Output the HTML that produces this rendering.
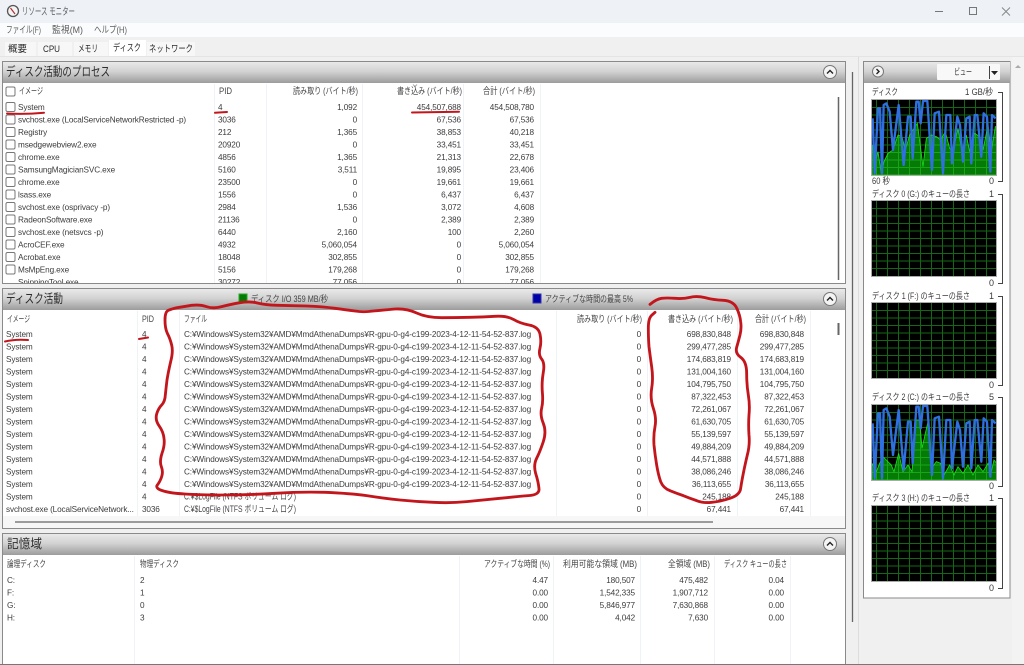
<!DOCTYPE html>
<html lang="ja"><head><meta charset="utf-8"><title>リソース モニター</title>
<style>
html,body{margin:0;padding:0;width:1024px;height:665px;overflow:hidden;background:#f0f0f0}
svg{display:block;font-family:"Liberation Sans","Noto Sans CJK JP",sans-serif}
body>svg{filter:blur(.35px)}
text{font-size:8.2px;fill:#3c3c3c;letter-spacing:-.12px}
.e{text-anchor:end}
.h{font-size:12.5px;fill:#2c2c2c;letter-spacing:0}
.j{font-size:9px;fill:#444;letter-spacing:0}
.m{font-size:9.5px;fill:#5c5c5c;letter-spacing:0}
.t{font-size:9.5px;fill:#2a2a2a;letter-spacing:0}
.g{font-size:9px;fill:#3a3a3a;letter-spacing:0}
.r{fill:none;stroke:#c2161c;stroke-linejoin:round;stroke-linecap:round}
.b{fill:none;stroke:#2f6fe0;stroke-width:7;stroke-linejoin:round}
.f{stroke:#16e016;stroke-width:2.5;fill:#067a06}
.s{stroke:#eef3f8;stroke-width:1}
</style></head><body>
<svg width="1024" height="665" viewBox="0 0 1024 665" xmlns="http://www.w3.org/2000/svg">
<defs>
<linearGradient id="hd" x1="0" y1="0" x2="0" y2="1"><stop offset="0" stop-color="#e9e9e9"/><stop offset=".45" stop-color="#d2d2d2"/><stop offset="1" stop-color="#9c9c9c"/></linearGradient>
<g id="grid"><path d="M4.5 0V75M15.5 0V75M26.5 0V75M37.5 0V75M48.5 0V75M59.5 0V75M70.5 0V75M81.5 0V75M92.5 0V75M103.5 0V75M114.5 0V75M0 7.5H124M0 15H124M0 22.5H124M0 30H124M0 37.5H124M0 45H124M0 52.5H124M0 60H124M0 67.5H124" fill="none" stroke="#2bd82b" stroke-opacity=".48" stroke-width="1"/></g>
</defs>
<rect width="1024" height="665" fill="#f0f0f0"/>
<!-- title -->
<rect width="1024" height="23" fill="#eef2f7"/>
<rect y="23" width="1024" height="14" fill="#fbfcfd"/>
<rect y="37" width="1024" height="19" fill="#f0f0f0"/>
<circle cx="13" cy="11" r="5.500" fill="#f4f4f4" stroke="#555" stroke-width="1.300"/><path d="M10.500 8l4.500 6" stroke="#b03030" stroke-width="1.200"/>
<text x="22" y="15" class="m" style="font-size:10px" textLength="53" lengthAdjust="spacingAndGlyphs">リソース モニター</text>
<path d="M935 11.500h8" stroke="#777"/><rect x="969.500" y="7.500" width="7" height="7" fill="none" stroke="#777"/><path d="M1002 7.500l8 8M1010 7.500l-8 8" stroke="#888"/>
<text x="6" y="33" class="m" textLength="35" lengthAdjust="spacingAndGlyphs">ファイル(F)</text><text x="52" y="33" class="m" textLength="31" lengthAdjust="spacingAndGlyphs">監視(M)</text><text x="94" y="33" class="m" textLength="33" lengthAdjust="spacingAndGlyphs">ヘルプ(H)</text>
<!-- tabs -->
<rect x="5" y="42" width="31" height="14" fill="#f7f7f7"/><rect x="38" y="42" width="34" height="14" fill="#f7f7f7"/><rect x="74" y="42" width="34" height="14" fill="#f7f7f7"/><rect x="109" y="40" width="37" height="16" fill="#fff"/><rect x="147" y="42" width="48" height="14" fill="#f7f7f7"/>
<text x="8" y="52" class="t" textLength="19" lengthAdjust="spacingAndGlyphs">概要</text><text x="43" y="52" class="t" textLength="17" lengthAdjust="spacingAndGlyphs">CPU</text><text x="78" y="52" class="t" textLength="20" lengthAdjust="spacingAndGlyphs">メモリ</text><text x="113" y="51" class="t" textLength="28" lengthAdjust="spacingAndGlyphs">ディスク</text><text x="149" y="52" class="t" textLength="44" lengthAdjust="spacingAndGlyphs">ネットワーク</text>
<rect y="56" width="1024" height="1" fill="#e4e4e4"/>
<!-- section 1 -->
<rect x="2.500" y="61.500" width="843" height="222" fill="#fff" stroke="#8a8a8a"/>
<rect x="3" y="62" width="842" height="21" fill="url(#hd)"/>
<text x="6" y="76" class="h" textLength="104" lengthAdjust="spacingAndGlyphs">ディスク活動のプロセス</text>
<circle cx="830" cy="72" r="6.500" fill="#f4f4f4" stroke="#777"/><path d="M827 73.500l3-3 3 3" fill="none" stroke="#222" stroke-width="1.400"/>
<path class="s" d="M214.500 84V283M266.500 84V283M362.500 84V283M463.500 84V283M540.500 84V283"/>
<rect x="6" y="87" width="9" height="9" rx="1.500" fill="#fff" stroke="#777"/>
<text x="19" y="94" class="j" textLength="24" lengthAdjust="spacingAndGlyphs">イメージ</text><text x="219" y="94" class="j" textLength="13" lengthAdjust="spacingAndGlyphs">PID</text>
<text x="293" y="94" class="j" textLength="65" lengthAdjust="spacingAndGlyphs">読み取り (バイト/秒)</text><text x="397" y="94" class="j" textLength="65" lengthAdjust="spacingAndGlyphs">書き込み (バイト/秒)</text><text x="483" y="94" class="j" textLength="52" lengthAdjust="spacingAndGlyphs">合計 (バイト/秒)</text>
<path d="M413 84.500l2 2 2-2" fill="none" stroke="#aaa"/>
<g fill="#fff" stroke="#777"><rect x="6" y="102.500" width="9" height="9" rx="1.500"/><rect x="6" y="115" width="9" height="9" rx="1.500"/><rect x="6" y="127.500" width="9" height="9" rx="1.500"/><rect x="6" y="140" width="9" height="9" rx="1.500"/><rect x="6" y="152.500" width="9" height="9" rx="1.500"/><rect x="6" y="165" width="9" height="9" rx="1.500"/><rect x="6" y="177.500" width="9" height="9" rx="1.500"/><rect x="6" y="190" width="9" height="9" rx="1.500"/><rect x="6" y="202.500" width="9" height="9" rx="1.500"/><rect x="6" y="215" width="9" height="9" rx="1.500"/><rect x="6" y="227.500" width="9" height="9" rx="1.500"/><rect x="6" y="240" width="9" height="9" rx="1.500"/><rect x="6" y="252.500" width="9" height="9" rx="1.500"/><rect x="6" y="265" width="9" height="9" rx="1.500"/></g>
<text x="18" y="110">System</text><text x="218" y="110">4</text><text x="357" y="110" class="e">1,092</text><text x="461" y="110" class="e">454,507,688</text><text x="534" y="110" class="e">454,508,780</text>
<text x="18" y="122.500" textLength="168">svchost.exe (LocalServiceNetworkRestricted -p)</text><text x="218" y="122.500">3036</text><text x="357" y="122.500" class="e">0</text><text x="461" y="122.500" class="e">67,536</text><text x="534" y="122.500" class="e">67,536</text>
<text x="18" y="135">Registry</text><text x="218" y="135">212</text><text x="357" y="135" class="e">1,365</text><text x="461" y="135" class="e">38,853</text><text x="534" y="135" class="e">40,218</text>
<text x="18" y="147.500">msedgewebview2.exe</text><text x="218" y="147.500">20920</text><text x="357" y="147.500" class="e">0</text><text x="461" y="147.500" class="e">33,451</text><text x="534" y="147.500" class="e">33,451</text>
<text x="18" y="160">chrome.exe</text><text x="218" y="160">4856</text><text x="357" y="160" class="e">1,365</text><text x="461" y="160" class="e">21,313</text><text x="534" y="160" class="e">22,678</text>
<text x="18" y="172.500">SamsungMagicianSVC.exe</text><text x="218" y="172.500">5160</text><text x="357" y="172.500" class="e">3,511</text><text x="461" y="172.500" class="e">19,895</text><text x="534" y="172.500" class="e">23,406</text>
<text x="18" y="185">chrome.exe</text><text x="218" y="185">23500</text><text x="357" y="185" class="e">0</text><text x="461" y="185" class="e">19,661</text><text x="534" y="185" class="e">19,661</text>
<text x="18" y="197.500">lsass.exe</text><text x="218" y="197.500">1556</text><text x="357" y="197.500" class="e">0</text><text x="461" y="197.500" class="e">6,437</text><text x="534" y="197.500" class="e">6,437</text>
<text x="18" y="210">svchost.exe (osprivacy -p)</text><text x="218" y="210">2984</text><text x="357" y="210" class="e">1,536</text><text x="461" y="210" class="e">3,072</text><text x="534" y="210" class="e">4,608</text>
<text x="18" y="222.500">RadeonSoftware.exe</text><text x="218" y="222.500">21136</text><text x="357" y="222.500" class="e">0</text><text x="461" y="222.500" class="e">2,389</text><text x="534" y="222.500" class="e">2,389</text>
<text x="18" y="235">svchost.exe (netsvcs -p)</text><text x="218" y="235">6440</text><text x="357" y="235" class="e">2,160</text><text x="461" y="235" class="e">100</text><text x="534" y="235" class="e">2,260</text>
<text x="18" y="247.500">AcroCEF.exe</text><text x="218" y="247.500">4932</text><text x="357" y="247.500" class="e">5,060,054</text><text x="461" y="247.500" class="e">0</text><text x="534" y="247.500" class="e">5,060,054</text>
<text x="18" y="260">Acrobat.exe</text><text x="218" y="260">18048</text><text x="357" y="260" class="e">302,855</text><text x="461" y="260" class="e">0</text><text x="534" y="260" class="e">302,855</text>
<text x="18" y="272.500">MsMpEng.exe</text><text x="218" y="272.500">5156</text><text x="357" y="272.500" class="e">179,268</text><text x="461" y="272.500" class="e">0</text><text x="534" y="272.500" class="e">179,268</text>
<text x="18" y="285">SnippingTool.exe</text><text x="218" y="285">30272</text><text x="357" y="285" class="e">77,056</text><text x="461" y="285" class="e">0</text><text x="534" y="285" class="e">77,056</text>
<rect x="0" y="284" width="848" height="5" fill="#f0f0f0"/>
<path d="M2.500 283.500H845.500" stroke="#8a8a8a"/>
<path d="M838.500 97V280" stroke="#666" stroke-width="1.500"/>
<!-- section 2 -->
<rect x="2.500" y="288.500" width="843" height="240" fill="#fff" stroke="#8a8a8a"/>
<rect x="3" y="289" width="842" height="21" fill="url(#hd)"/>
<text x="6" y="303" class="h" textLength="57" lengthAdjust="spacingAndGlyphs">ディスク活動</text>
<rect x="239" y="294" width="8" height="9" fill="#067a06" stroke="#2a2"/>
<text x="251" y="302" class="j" textLength="77" lengthAdjust="spacingAndGlyphs">ディスク I/O 359 MB/秒</text>
<rect x="533" y="294" width="8" height="9" fill="#0000a8" stroke="#33a"/>
<text x="545" y="302" class="j" textLength="88" lengthAdjust="spacingAndGlyphs">アクティブな時間の最高 5%</text>
<circle cx="830" cy="299" r="6.500" fill="#f4f4f4" stroke="#777"/><path d="M827 300.500l3-3 3 3" fill="none" stroke="#222" stroke-width="1.400"/>
<path class="s" d="M137.500 311V516M179.500 311V516M556.500 311V516M647.500 311V516M737.500 311V516M810.500 311V516"/>
<text x="7" y="322" class="j" textLength="23" lengthAdjust="spacingAndGlyphs">イメージ</text><text x="142" y="322" class="j" textLength="12" lengthAdjust="spacingAndGlyphs">PID</text><text x="184" y="322" class="j" textLength="23" lengthAdjust="spacingAndGlyphs">ファイル</text>
<text x="577" y="322" class="j" textLength="65" lengthAdjust="spacingAndGlyphs">読み取り (バイト/秒)</text><text x="668" y="322" class="j" textLength="65" lengthAdjust="spacingAndGlyphs">書き込み (バイト/秒)</text><text x="755" y="322" class="j" textLength="51" lengthAdjust="spacingAndGlyphs">合計 (バイト/秒)</text>
<text x="6" y="337">System</text><text x="142" y="337">4</text><text x="184" y="337" textLength="347">C:¥Windows¥System32¥AMD¥MmdAthenaDumps¥R-gpu-0-g4-c199-2023-4-12-11-54-52-837.log</text><text x="641" y="337" class="e">0</text><text x="731" y="337" class="e">698,830,848</text><text x="804" y="337" class="e">698,830,848</text>
<text x="6" y="349.500">System</text><text x="142" y="349.500">4</text><text x="184" y="349.500" textLength="347">C:¥Windows¥System32¥AMD¥MmdAthenaDumps¥R-gpu-0-g4-c199-2023-4-12-11-54-52-837.log</text><text x="641" y="349.500" class="e">0</text><text x="731" y="349.500" class="e">299,477,285</text><text x="804" y="349.500" class="e">299,477,285</text>
<text x="6" y="362">System</text><text x="142" y="362">4</text><text x="184" y="362" textLength="347">C:¥Windows¥System32¥AMD¥MmdAthenaDumps¥R-gpu-0-g4-c199-2023-4-12-11-54-52-837.log</text><text x="641" y="362" class="e">0</text><text x="731" y="362" class="e">174,683,819</text><text x="804" y="362" class="e">174,683,819</text>
<text x="6" y="374.500">System</text><text x="142" y="374.500">4</text><text x="184" y="374.500" textLength="347">C:¥Windows¥System32¥AMD¥MmdAthenaDumps¥R-gpu-0-g4-c199-2023-4-12-11-54-52-837.log</text><text x="641" y="374.500" class="e">0</text><text x="731" y="374.500" class="e">131,004,160</text><text x="804" y="374.500" class="e">131,004,160</text>
<text x="6" y="387">System</text><text x="142" y="387">4</text><text x="184" y="387" textLength="347">C:¥Windows¥System32¥AMD¥MmdAthenaDumps¥R-gpu-0-g4-c199-2023-4-12-11-54-52-837.log</text><text x="641" y="387" class="e">0</text><text x="731" y="387" class="e">104,795,750</text><text x="804" y="387" class="e">104,795,750</text>
<text x="6" y="399.500">System</text><text x="142" y="399.500">4</text><text x="184" y="399.500" textLength="347">C:¥Windows¥System32¥AMD¥MmdAthenaDumps¥R-gpu-0-g4-c199-2023-4-12-11-54-52-837.log</text><text x="641" y="399.500" class="e">0</text><text x="731" y="399.500" class="e">87,322,453</text><text x="804" y="399.500" class="e">87,322,453</text>
<text x="6" y="412">System</text><text x="142" y="412">4</text><text x="184" y="412" textLength="347">C:¥Windows¥System32¥AMD¥MmdAthenaDumps¥R-gpu-0-g4-c199-2023-4-12-11-54-52-837.log</text><text x="641" y="412" class="e">0</text><text x="731" y="412" class="e">72,261,067</text><text x="804" y="412" class="e">72,261,067</text>
<text x="6" y="424.500">System</text><text x="142" y="424.500">4</text><text x="184" y="424.500" textLength="347">C:¥Windows¥System32¥AMD¥MmdAthenaDumps¥R-gpu-0-g4-c199-2023-4-12-11-54-52-837.log</text><text x="641" y="424.500" class="e">0</text><text x="731" y="424.500" class="e">61,630,705</text><text x="804" y="424.500" class="e">61,630,705</text>
<text x="6" y="437">System</text><text x="142" y="437">4</text><text x="184" y="437" textLength="347">C:¥Windows¥System32¥AMD¥MmdAthenaDumps¥R-gpu-0-g4-c199-2023-4-12-11-54-52-837.log</text><text x="641" y="437" class="e">0</text><text x="731" y="437" class="e">55,139,597</text><text x="804" y="437" class="e">55,139,597</text>
<text x="6" y="449.500">System</text><text x="142" y="449.500">4</text><text x="184" y="449.500" textLength="347">C:¥Windows¥System32¥AMD¥MmdAthenaDumps¥R-gpu-0-g4-c199-2023-4-12-11-54-52-837.log</text><text x="641" y="449.500" class="e">0</text><text x="731" y="449.500" class="e">49,884,209</text><text x="804" y="449.500" class="e">49,884,209</text>
<text x="6" y="462">System</text><text x="142" y="462">4</text><text x="184" y="462" textLength="347">C:¥Windows¥System32¥AMD¥MmdAthenaDumps¥R-gpu-0-g4-c199-2023-4-12-11-54-52-837.log</text><text x="641" y="462" class="e">0</text><text x="731" y="462" class="e">44,571,888</text><text x="804" y="462" class="e">44,571,888</text>
<text x="6" y="474.500">System</text><text x="142" y="474.500">4</text><text x="184" y="474.500" textLength="347">C:¥Windows¥System32¥AMD¥MmdAthenaDumps¥R-gpu-0-g4-c199-2023-4-12-11-54-52-837.log</text><text x="641" y="474.500" class="e">0</text><text x="731" y="474.500" class="e">38,086,246</text><text x="804" y="474.500" class="e">38,086,246</text>
<text x="6" y="487">System</text><text x="142" y="487">4</text><text x="184" y="487" textLength="347">C:¥Windows¥System32¥AMD¥MmdAthenaDumps¥R-gpu-0-g4-c199-2023-4-12-11-54-52-837.log</text><text x="641" y="487" class="e">0</text><text x="731" y="487" class="e">36,113,655</text><text x="804" y="487" class="e">36,113,655</text>
<text x="6" y="499.500">System</text><text x="142" y="499.500">4</text><text x="184" y="499.500" class="j" textLength="112" lengthAdjust="spacingAndGlyphs">C:¥$LogFile (NTFS ボリューム ログ)</text><text x="641" y="499.500" class="e">0</text><text x="731" y="499.500" class="e">245,188</text><text x="804" y="499.500" class="e">245,188</text>
<text x="6" y="512">svchost.exe (LocalServiceNetwork...</text><text x="142" y="512">3036</text><text x="184" y="512" class="j" textLength="112" lengthAdjust="spacingAndGlyphs">C:¥$LogFile (NTFS ボリューム ログ)</text><text x="641" y="512" class="e">0</text><text x="731" y="512" class="e">67,441</text><text x="804" y="512" class="e">67,441</text>
<rect x="3" y="516" width="842" height="12" fill="#f7f7f7"/>
<path d="M15 522H713" stroke="#666" stroke-width="1.300"/>
<path d="M838.500 323V335" stroke="#666" stroke-width="2"/>
<!-- section 3 -->
<rect x="2.500" y="533.500" width="843" height="132" fill="#fff" stroke="#8a8a8a"/>
<rect x="3" y="534" width="842" height="21" fill="url(#hd)"/>
<text x="7" y="548" class="h" textLength="35" lengthAdjust="spacingAndGlyphs">記憶域</text>
<circle cx="830" cy="544" r="6.500" fill="#f4f4f4" stroke="#777"/><path d="M827 545.500l3-3 3 3" fill="none" stroke="#222" stroke-width="1.400"/>
<path class="s" d="M134.500 556V664M459.500 556V664M553.500 556V664M640.500 556V664M714.500 556V664M790.500 556V664"/>
<text x="7" y="567" class="j" textLength="39" lengthAdjust="spacingAndGlyphs">論理ディスク</text><text x="140" y="567" class="j" textLength="39" lengthAdjust="spacingAndGlyphs">物理ディスク</text>
<text x="484" y="567" class="j" textLength="66" lengthAdjust="spacingAndGlyphs">アクティブな時間 (%)</text><text x="563" y="567" class="j" textLength="74" lengthAdjust="spacingAndGlyphs">利用可能な領域 (MB)</text><text x="668" y="567" class="j" textLength="42" lengthAdjust="spacingAndGlyphs">全領域 (MB)</text><text x="724" y="567" class="j" textLength="63" lengthAdjust="spacingAndGlyphs">ディスク キューの長さ</text>
<text x="7" y="583">C:</text><text x="140" y="583">2</text><text x="548" y="583" class="e">4.47</text><text x="635" y="583" class="e">180,507</text><text x="708" y="583" class="e">475,482</text><text x="784" y="583" class="e">0.04</text>
<text x="7" y="595.500">F:</text><text x="140" y="595.500">1</text><text x="548" y="595.500" class="e">0.00</text><text x="635" y="595.500" class="e">1,542,335</text><text x="708" y="595.500" class="e">1,907,712</text><text x="784" y="595.500" class="e">0.00</text>
<text x="7" y="608">G:</text><text x="140" y="608">0</text><text x="548" y="608" class="e">0.00</text><text x="635" y="608" class="e">5,846,977</text><text x="708" y="608" class="e">7,630,868</text><text x="784" y="608" class="e">0.00</text>
<text x="7" y="620.500">H:</text><text x="140" y="620.500">3</text><text x="548" y="620.500" class="e">0.00</text><text x="635" y="620.500" class="e">4,042</text><text x="708" y="620.500" class="e">7,630</text><text x="784" y="620.500" class="e">0.00</text>
<!-- outer scrollbar -->
<path d="M852.500 72V622" stroke="#666" stroke-width="1.300"/>
<path d="M858.500 57V665" stroke="#ddd"/>
<!-- right panel -->
<rect x="863.500" y="61.500" width="146.500" height="536.500" fill="#fff" stroke="#8a8a8a"/>
<rect x="864" y="62" width="146" height="21" fill="url(#hd)"/>
<circle cx="878" cy="71.500" r="5.500" fill="#f4f4f4" stroke="#777"/><path d="M876.500 69l2.500 2.500-2.500 2.500" fill="none" stroke="#222" stroke-width="1.400"/>
<rect x="937" y="64" width="63" height="16" rx="1" fill="#f8f8f8"/>
<text x="954" y="75" class="g" textLength="18" lengthAdjust="spacingAndGlyphs">ビュー</text>
<path d="M989.500 66V79" stroke="#444"/><path d="M991 71h7l-3.500 4z" fill="#222"/>
<rect x="1012" y="57" width="12" height="608" fill="#f3f3f3"/><path d="M1015 68l3-3 3 3z" fill="#aaa"/>
<!-- labels -->
<text x="872" y="95" class="g" textLength="26" lengthAdjust="spacingAndGlyphs">ディスク</text><text x="965" y="95" class="g" textLength="28" lengthAdjust="spacingAndGlyphs">1 GB/秒</text>
<text x="872" y="184" class="g" textLength="18" lengthAdjust="spacingAndGlyphs">60 秒</text><text x="994" y="184" class="g e">0</text>
<text x="872" y="197" class="g" textLength="98" lengthAdjust="spacingAndGlyphs">ディスク 0 (G:) のキューの長さ</text><text x="994" y="197" class="g e">1</text><text x="994" y="286" class="g e">0</text>
<text x="872" y="299" class="g" textLength="98" lengthAdjust="spacingAndGlyphs">ディスク 1 (F:) のキューの長さ</text><text x="994" y="299" class="g e">1</text><text x="994" y="388" class="g e">0</text>
<text x="872" y="400" class="g" textLength="98" lengthAdjust="spacingAndGlyphs">ディスク 2 (C:) のキューの長さ</text><text x="994" y="400" class="g e">5</text><text x="994" y="489" class="g e">0</text>
<text x="872" y="501" class="g" textLength="98" lengthAdjust="spacingAndGlyphs">ディスク 3 (H:) のキューの長さ</text><text x="994" y="501" class="g e">1</text><text x="994" y="591" class="g e">0</text>
<path d="M998 92.500h4.500v89h-4.500M998 194.500h4.500v89h-4.500M998 296.500h4.500v89h-4.500M998 397.500h4.500v89h-4.500M998 498.500h4.500v90h-4.500" fill="none" stroke="#444"/>
<!-- graphs -->
<rect x="871.500" y="99.500" width="125" height="76" fill="none" stroke="#aaa"/>
<svg x="872" y="100" width="124" height="75"><rect width="124" height="75" fill="#000"/><g transform="translate(-4,-5) scale(.3333)"><polygon class="f" points="12,240 12,150 22,200 30,170 40,236 48,200 60,175 75,165 90,120 102,125 112,165 125,120 135,105 148,85 158,160 165,215 175,130 190,120 205,125 218,135 232,110 245,160 255,170 270,100 282,170 295,120 305,170 320,115 335,125 345,165 360,90 370,170 382,95 390,95 390,240"/></g><use href="#grid"/><g transform="translate(-4,-5) scale(.3333)"><polyline class="b" points="14,70 20,235 30,40 36,40 42,235 47,30 55,25 65,50 75,165 92,30 107,210 120,65 128,65 134,190 145,20 152,20 158,85 165,18 178,18 192,225 200,55 213,50 225,235 235,60 247,60 252,205 268,65 276,90 285,200 295,70 305,65 310,205 320,60 328,60 340,185 347,55 357,65 367,230 372,60 383,70"/></g></svg>
<rect x="871.500" y="200.500" width="125" height="76" fill="none" stroke="#aaa"/>
<svg x="872" y="201" width="124" height="75"><rect width="124" height="75" fill="#000"/><use href="#grid"/></svg>
<rect x="871.500" y="302.500" width="125" height="76" fill="none" stroke="#aaa"/>
<svg x="872" y="303" width="124" height="75"><rect width="124" height="75" fill="#000"/><use href="#grid"/></svg>
<rect x="871.500" y="404.500" width="125" height="76" fill="none" stroke="#aaa"/>
<svg x="872" y="405" width="124" height="75"><rect width="124" height="75" fill="#000"/><g transform="translate(-4,-5) scale(.3333)"><polygon class="f" points="12,240 12,190 25,215 35,190 45,170 55,180 70,195 78,215 92,160 105,215 120,195 132,215 145,60 155,60 162,145 172,100 180,65 190,205 205,185 218,190 228,225 245,195 258,225 270,200 285,220 300,195 315,225 330,195 345,215 360,190 370,215 378,180 390,195 390,240"/></g><use href="#grid"/><g transform="translate(-4,-5) scale(.3333)"><polyline class="b" points="14,70 20,235 30,40 36,40 42,235 47,30 55,25 65,50 75,165 92,30 107,210 120,65 128,65 134,190 145,20 152,20 158,85 165,18 178,18 192,225 200,55 213,50 225,235 235,60 247,60 252,205 268,65 276,90 285,200 295,70 305,65 310,205 320,60 328,60 340,185 347,55 357,65 367,230 372,60 383,70"/></g></svg>
<rect x="871.500" y="505.500" width="125" height="76" fill="none" stroke="#aaa"/>
<svg x="872" y="506" width="124" height="75"><rect width="124" height="75" fill="#000"/><use href="#grid"/></svg>
<!-- red annotations -->
<path class="r" stroke-width="2" d="M7 113.500Q25 114.500 44 112.700M215 112.800L227 112M412 112.500L459 111.700M5 341.500Q15 339 28 340M139 339L148 337.500"/>
<g transform="translate(150,295) scale(.3333)"><path class="r" stroke-width="8.500" d="M55 46Q65 42 82 38Q100 35 125 31Q150 28 170 35Q190 42 215 35Q240 28 270 23Q300 18 322 24Q345 30 382 31Q420 32 470 33Q520 35 555 40Q590 45 615 48Q640 52 670 48Q700 45 735 42Q770 40 800 54Q830 68 875 68Q920 68 960 67Q1000 66 1035 64Q1070 62 1090 73Q1110 85 1137 90Q1165 95 1170 117Q1175 140 1170 160Q1165 180 1175 192Q1185 205 1180 232Q1175 260 1177 290Q1180 320 1175 340Q1170 360 1180 385Q1190 410 1180 440Q1170 470 1160 490Q1150 510 1157 535Q1165 560 1167 580Q1170 600 1135 602Q1100 605 1050 610Q1000 615 950 620Q900 625 850 622Q800 620 750 615Q700 610 650 602Q600 595 525 592Q450 590 375 595Q300 600 225 600Q150 600 105 597Q60 595 37 587Q15 580 22 570Q30 560 35 545Q40 530 34 515Q28 500 36 475Q45 450 42 430Q40 410 27 392Q15 375 20 357Q25 340 35 330Q45 320 46 300Q48 280 51 255Q55 230 62 200Q70 170 65 150Q60 130 52 115Q45 100 45 75Q45 50 55 46"/></g>
<g transform="translate(640,285) scale(.3333)"><path class="r" stroke-width="8.500" d="M30 58Q50 42 65 40Q80 38 105 40Q130 42 150 37Q170 32 195 38Q220 45 250 46Q280 48 290 69Q300 90 302 110Q305 130 300 150Q295 170 290 187Q285 205 302 217Q320 230 320 265Q320 300 325 330Q330 360 327 390Q325 420 327 450Q330 480 322 510Q315 540 310 565Q305 590 302 610Q300 630 270 640Q240 650 215 652Q190 655 170 647Q150 640 130 632Q110 625 90 617Q70 610 62 590Q55 570 50 540Q45 510 42 480Q40 450 45 425Q50 400 40 370Q30 340 35 310Q40 280 35 245Q30 210 27 185Q25 160 25 130Q25 100 35 91L45 82"/></g>
<rect y="664" width="1024" height="1" fill="#777"/>
</svg>
</body></html>
